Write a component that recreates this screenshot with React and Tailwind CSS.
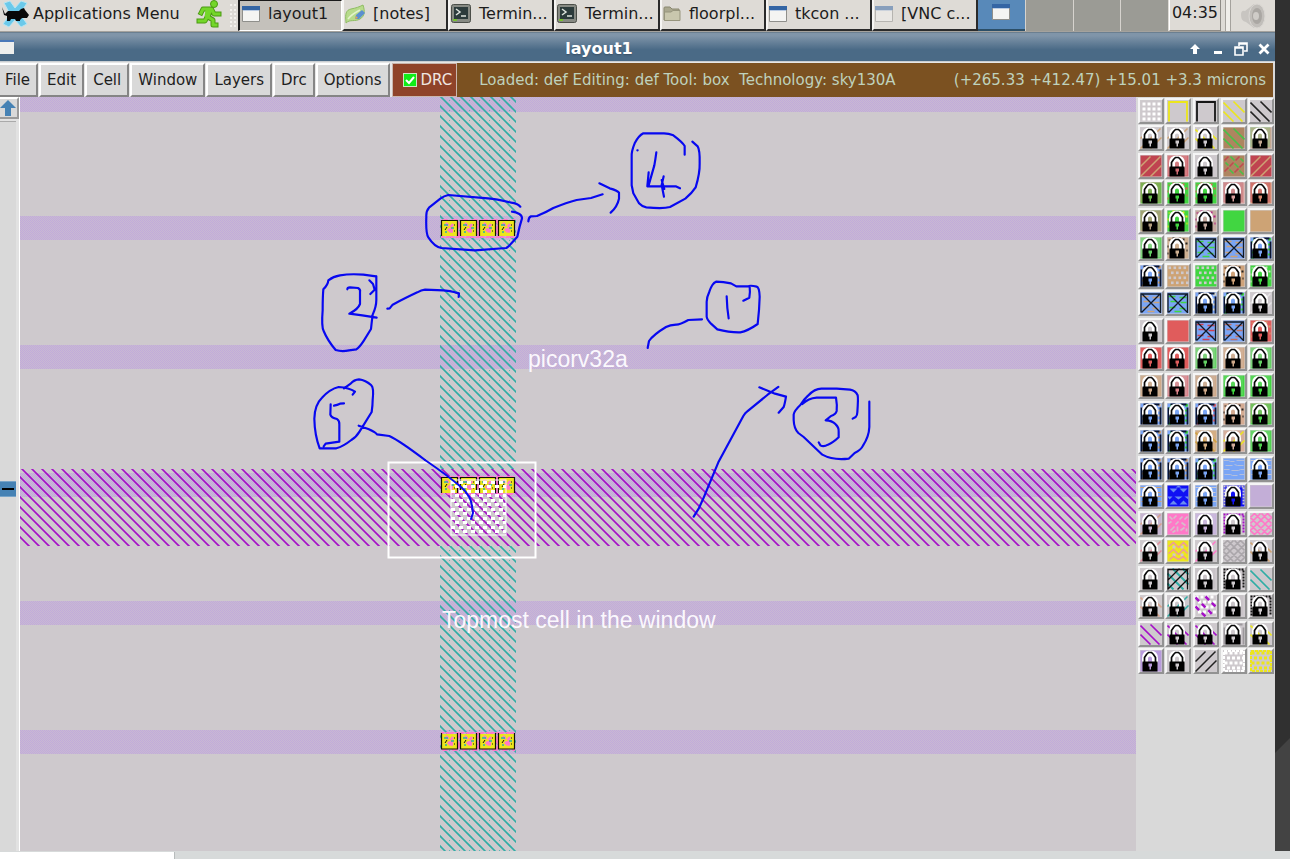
import React from "react";

const GRAY = "#cec9cd";
const GREEN = "#41d641";
const TAN = "#cda375";
const RED = "#e05c5c";
const BLUE = "#7aa5f5";
const PURPLE = "#a50fc8";
const TEAL = "#2fada5";
const PINK = "#ff78c8";
const YELLOW = "#ece61c";

/* Each swatch: [locked, fill, motif, colour, second colour] */
const PALETTE = [
  [0, GRAY, "dots", "#ffffff"], [0, GRAY, "open", YELLOW], [0, GRAY, "open", "#161616"], [0, GRAY, "diag", YELLOW], [0, GRAY, "diag", "#222222"],
  [1, GRAY, "slash", TAN], [1, GRAY, "slash", TAN], [1, GRAY, "diag", YELLOW], [0, "#ae8560", "diag", "#48c048"], [1, "#c4a892", "dither", "#5fd06a"],
  [0, "#c04450", "slash", TAN], [1, "#cf6a72", "dither", "#e6b9b4"], [1, GRAY, "none"], [0, "#ae8560", "weave", "#c04a50", "#48c048"], [0, "#c04450", "slash", TAN],
  [1, "#6cba4e", "dither", "#b08a60"], [1, GREEN, "specks", RED], [1, GREEN, "specks", RED], [1, "#d9a09c", "dither", "#b5445a"], [1, "#d98a70", "dither", "#b5305a"],
  [1, "#b4a080", "dither", "#69b050"], [1, GREEN, "specks", YELLOW], [1, "#c4aaa0", "specks", "#b01c80"], [0, GREEN, "none"], [0, TAN, "none"],
  [1, "#64d264", "dither", "#d8d8cc"], [1, "#cfb091", "specks", "#222222"], [0, BLUE, "xbox", GREEN], [0, BLUE, "xbox", TAN], [1, BLUE, "frame", "#0a1430", GREEN],
  [1, BLUE, "frame", "#0a1430", TAN], [0, TAN, "brick", GRAY], [0, GREEN, "brick", GRAY], [1, "#cfa37a", "specks", "#222222"], [1, GREEN, "specks", "#d8d8cc"],
  [0, BLUE, "xbox", TAN], [0, BLUE, "xbox", GREEN], [1, BLUE, "frame", "#0a1430", "#d8d8cc"], [1, BLUE, "frame", "#0a1430", GREEN], [1, GRAY, "slash", "#e6e4e6"],
  [1, GRAY, "none"], [0, RED, "none"], [0, BLUE, "xbox", "#d04050"], [0, BLUE, "xbox", "#c07060"], [1, RED, "specks", TAN],
  [1, RED, "none"], [1, RED, "none"], [1, "#64d264", "dither", "#c8d0c0"], [1, "#cfa98a", "dither", "#d8c8bc"], [1, "#64d264", "dither", "#c8d0c0"],
  [1, "#cfa98a", "dither", "#c8c0a8"], [1, "#d98088", "dither", "#d8c8c8"], [1, "#cfa98a", "dither", "#c8c0b8"], [1, GREEN, "dither", "#a0d8a0"], [1, GREEN, "dither", "#a0d8a0"],
  [1, BLUE, "frame", "#0a1430", "#d8c8bc"], [1, BLUE, "frame", "#0a1430", GREEN], [1, BLUE, "frame", "#0a1430", "#d86070"], [1, "#d4ab92", "specks", "#222222"], [1, "#50d250", "dither", "#d89080"],
  [1, BLUE, "frame", "#0a1430", TAN], [1, BLUE, "frame", "#0a1430", GREEN], [1, "#d4ae84", "diag", "#d0a040"], [1, "#d4ae9c", "slash", YELLOW], [1, "#50d250", "dither", "#a8d8a8"],
  [1, BLUE, "frame", "#0a1430", TAN], [1, BLUE, "frame", "#0a1430", TAN], [1, BLUE, "frame", "#0a1430", GREEN], [0, BLUE, "waves", "#b4bfdc"], [1, BLUE, "waves", "#c8c8d4"],
  [1, BLUE, "waves", TAN], [0, "#1010f4", "tri", "#6a8cf0"], [1, BLUE, "waves", "#c8c8d4"], [1, "#1010f4", "dashed", GRAY], [0, "#c6b0d8", "dither", "#bda9d2"],
  [1, "#c6b4d0", "slash", "#d6a08c"], [0, PINK, "petals", "#d8bccb"], [1, "#c8b4dc", "dither", "#d0c4dc"], [1, GRAY, "dashed", PURPLE], [0, GRAY, "hatch", PINK],
  [1, GRAY, "slash", "#e08c9c"], [0, YELLOW, "tape", "#ee9a9a"], [1, GRAY, "slash", PINK], [0, GRAY, "hatch", "#aaa6aa"], [1, GRAY, "diag", TAN],
  [1, GRAY, "none"], [0, GRAY, "crossbox", TEAL], [1, GRAY, "dither", "#b8b4b8"], [1, GRAY, "dashed", "#161616"], [0, GRAY, "diag", TEAL],
  [1, GRAY, "diag", "#d8a48c"], [1, GRAY, "slash", TEAL], [0, "#ffffff", "dashdiag", PURPLE], [1, GRAY, "dither", "#b8b4b8"], [1, GRAY, "dashed", "#161616"],
  [0, GRAY, "diag", PURPLE], [1, GRAY, "diag", PURPLE], [1, GRAY, "diag", PURPLE], [1, GRAY, "frame", "#9c989c", GRAY], [1, GRAY, "diag", YELLOW],
  [1, "#b89adc", "none"], [1, GRAY, "none"], [0, GRAY, "slash", "#222222"], [0, GRAY, "mesh", "#ffffff"], [0, GRAY, "mesh", YELLOW],
];

const DIAG = "M0 11L10 21M0 2L19 21M10 1L21 12";
const SLASH = "M0 11L10 1M0 21L20 1M10 21L21 10";

function gridCells(step, size, offset, stagger) {
  const cells = [];
  let row = 0;
  for (let y = offset; y < 20; y += step) {
    for (let x = offset + (stagger && row % 2 ? step / 2 : 0); x < 20; x += step) {
      cells.push(<rect key={`${x}-${y}`} x={x} y={y} width={size} height={size} />);
    }
    row += 1;
  }
  return cells;
}

function Motif({ kind, a, b }) {
  switch (kind) {
    case "dots":
      return <g fill={a}>{gridCells(5, 3, 2)}</g>;
    case "mesh":
      return (
        <g fill={a}>
          {gridCells(5, 3, 1, true)}
          <path d="M.5 .5H20.500V20.500H.5Z" fill="none" stroke={a} strokeWidth="2" strokeDasharray="3 1" />
        </g>
      );
    case "brick":
      return <g fill={a}>{gridCells(5, 2.6, 1, true)}</g>;
    case "dither":
      return <g fill={a}>{gridCells(2, 1, 0)}</g>;
    case "specks":
      return <path d="M1 2h2v1h-2zM5 0h2v2h-2zM15 1h2v2h-2zM18 5h2v2h-2zM0 8h1v2h-1zM19 12h1v2h-1zM12 0h1v1h-1zM0 15h1v2h-1z" fill={a} />;
    case "open":
      return <path d="M1.500 21V1.500H19.500V21" fill="none" stroke={a} strokeWidth="1.800" />;
    case "diag":
      return <path d={DIAG} fill="none" stroke={a} strokeWidth="1.600" />;
    case "dashdiag":
      return (
        <g fill="none">
          <path d="M0 0H21V21H0Z" fill={GRAY} />
          <g fill="#ffffff">{gridCells(5, 3, 0, true)}</g>
          <path d={DIAG} stroke={a} strokeWidth="2.500" strokeDasharray="5 4" />
        </g>
      );
    case "slash":
      return <path d={SLASH} fill="none" stroke={a} strokeWidth="1.500" />;
    case "hatch":
      return <path d="M0 4L4 0L21 17L17 21L0 4M0 11L10 21M11 0L21 10M0 17L17 0L21 4L4 21ZM0 10L10 0M11 21L21 11" fill="none" stroke={a} strokeWidth="1.600" />;
    case "weave":
      return (
        <g fill="none" strokeWidth="1.600">
          <path d="M1 5L5 1M12 5L16 1M6 11L10 7M16 12L20 8M1 16L5 12M11 17L15 13" stroke={a} />
          <path d="M7 1L11 5M17 3L20 6M2 7L5 10M11 8L15 12M6 14L10 18M16 15L20 19" stroke={b} />
        </g>
      );
    case "xbox":
      return (
        <g fill="none">
          <path d="M1 4H8M12 5H19M3 9H9M13 10H19M2 15H8M12 16H18M7 19H14" stroke={a} strokeWidth="1.700" />
          <path d="M.5 20V1.500H20V20.500M1 1L20 20M20 1L1 20" stroke="#111a26" strokeWidth="1.300" />
        </g>
      );
    case "crossbox":
      return (
        <g fill="none">
          <path d="M0 5L16 21M5 0L21 16M0 15L6 21M15 0L21 6" stroke={a} strokeWidth="2" />
          <path d="M0 12L12 0M0 21L21 0M10 21L21 10M.5 21V1H20V21" stroke="#111111" strokeWidth="1.300" />
        </g>
      );
    case "frame":
      return (
        <g fill="none">
          <path d="M2 21V2H19V21" stroke={b} strokeWidth="3" strokeDasharray="2 3" />
          <path d="M1 21V4M3 1H8M13 1H19M20 4V21" stroke={a} strokeWidth="1.800" />
        </g>
      );
    case "dashed":
      return <path d="M1 20V1H20V20" fill="none" stroke={a} strokeWidth="2" strokeDasharray="2 1" />;
    case "waves":
      return <path d="M0 2H5L7 3H11M13 2H21M2 7H9M11 6L14 7H20M0 11H6M8 12H15L17 11H21M1 16H7L9 17H14M16 16H21" fill="none" stroke={a} />;
    case "tri":
      return <path d="M2 3H10L6 7ZM12 3H20L16 7ZM0 11H5L2 14ZM7 11H15L11 14ZM17 11H21V14ZM2 19H10L6 15ZM12 19H20L16 15ZM8 2L11 0L14 2Z" fill={a} />;
    case "petals":
      return <path d="M2 3L5 6M9 2L6 5M12 6L15 3M17 6L20 3M1 10L4 8M8 11L11 8M14 9L18 12M3 17L7 13M10 13V18M13 17L17 14M19 18V15M8 17L5 19" fill="none" stroke={a} strokeWidth="1.700" />;
    case "tape":
      return (
        <g fill="none">
          <path d="M5 5H8V8H5ZM13 5H16V8H13ZM5 13H8V16H5ZM13 13H16V16H13Z" fill={GRAY} />
          <path d="M1 6L6 2L11 7L16 2L20 6M1 13L6 9L11 14L16 9L20 13M2 19L6 16L11 19L16 16L19 19" stroke={a} strokeWidth="1.500" />
        </g>
      );
    default:
      return null;
  }
}

function Lock({ tint }) {
  return (
    <g>
      <path d="M4.500 12V8C4.500 4 7 3 9.500 3S14.500 4 14.500 8V12" fill="none" stroke="#fff" strokeWidth="6" />
      <path d="M4 12V7L6 4L8 2H11L13 4L15 7V12" fill="none" stroke="#0a0a0a" strokeWidth="1.700" />
      <path d="M2 11H17V21H2Z" fill="#000" />
      <path d="M8 13H11.500V16H10.500V19H9V16H8Z" fill={tint} />
    </g>
  );
}

function Swatch({ data, index }) {
  const [locked, fill, kind, a, b] = data;
  return (
    <button
      type="button"
      aria-label={`Layer ${index + 1}`}
      className="size-[26px] overflow-hidden border-2 border-t-[#f5f5f5] border-r-[#929292] border-b-[#929292] border-l-[#f5f5f5] bg-[#d0cdd0]"
    >
      <svg viewBox="-0.5 -0.5 22 22" className="block size-full">
        <path d="M0 0H21V21H0Z" fill={fill} />
        <Motif kind={kind} a={a} b={b} />
        {locked ? <Lock tint={fill} /> : null}
      </svg>
    </button>
  );
}

function WindowIcon({ faded }) {
  return (
    <svg viewBox="0 0 18 16" className={faded ? "h-4 w-[18px] shrink-0 opacity-50" : "h-4 w-[18px] shrink-0"}>
      <path d="M.5 .5H17.500V15.500H.5Z" fill="#f4f4f2" stroke="#8f8f8b" />
      <path d="M0 0H18V4H0Z" fill="#3465a4" />
      <path d="M1 4.500H17" stroke="#b9cbe3" />
    </svg>
  );
}

function TerminalIcon() {
  return (
    <svg viewBox="0 0 20 20" className="size-5 shrink-0">
      <rect x=".5" y=".5" width="19" height="18" rx="2" fill="#878a83" stroke="#4b4e48" />
      <path d="M3 3H17V15H3Z" fill="#2c3b3b" />
      <path d="M5 5L9 8L5 11M10 12H15" fill="none" stroke="#dde3dd" strokeWidth="1.500" />
      <path d="M2 16H6" stroke="#73d216" strokeWidth="1.500" />
    </svg>
  );
}

function FolderIcon() {
  return (
    <svg viewBox="0 0 18 16" className="h-4 w-[18px] shrink-0">
      <path d="M1 2Q1 1 2 1H7L9 3H16V14H1Z" fill="#aaa88f" stroke="#8a8871" />
      <path d="M1.500 6H8L10 4.500H17V14.500H1.500Z" fill="#c9c7ad" stroke="#97957d" />
    </svg>
  );
}

function LeafIcon() {
  return (
    <svg viewBox="0 0 20 20" className="size-5 shrink-0">
      <path d="M1 18C0 10 1 6 6 5C11 4 14 3 18 1C20 7 20 12 15 15C10 18 5 15 1 19Z" fill="#b7db8b" stroke="#8fbd63" />
      <path d="M3 15C6 11 9 9 15 6" fill="none" stroke="#e3f2cc" strokeWidth="1.500" />
      <path d="M10 15L11 11L17 6L20 9L14 15Z" fill="#5b8fd0" />
      <path d="M10 15L11 12L13 14Z" fill="#e9a54c" />
    </svg>
  );
}

function MouseIcon() {
  return (
    <svg viewBox="0 0 28 28" className="size-7 shrink-0">
      <path d="M3 3L9 1L14 8L20 1L26 3L19 14L26 24L20 27L14 20L8 27L2 24L9 14Z" fill="#6bc9ea" stroke="#b5e5f3" />
      <path d="M1 7L4 14L7 11H18L20 9L23 8L24 10L28 15L26 18H21L19 20V21H15L14 19H10L9 21H6V16L3 15Z" fill="#080808" />
    </svg>
  );
}

function RunnerIcon() {
  return (
    <svg viewBox="0 0 26 28" className="h-7 w-[26px] shrink-0">
      <g fill="none" strokeLinecap="square" strokeLinejoin="round">
        <path d="M5 13L7 9H15L12 17L17 20V25H20M16 10L18 14H23M11 17L9 21H3" stroke="#4a9a12" strokeWidth="5" />
        <path d="M5 13L7 9H15L12 17L17 20V25H20M16 10L18 14H23M11 17L9 21H3" stroke="#74d62a" strokeWidth="3" />
      </g>
      <circle cx="18" cy="4" r="3.500" fill="#74d62a" stroke="#4a9a12" />
      <path d="M12 10L11 17" stroke="#74d62a" strokeWidth="5" />
    </svg>
  );
}

function SpeakerIcon() {
  return (
    <svg viewBox="0 0 28 26" className="h-[26px] w-7">
      <path d="M2 12Q2 7 6 8L15 1V25L7 19Q2 18 2 12Z" fill="#c8c5c1" />
      <ellipse cx="18" cy="13" rx="8" ry="12" fill="#c1beba" stroke="#dad7d3" />
      <ellipse cx="18" cy="13" rx="5" ry="8" fill="#aaa7a3" />
      <ellipse cx="17" cy="13" rx="3" ry="4" fill="#cfccc8" />
    </svg>
  );
}

const TASKS = [
  { label: "[notes]", icon: <LeafIcon /> },
  { label: "Termin...", icon: <TerminalIcon /> },
  { label: "Termin...", icon: <TerminalIcon /> },
  { label: "floorpl...", icon: <FolderIcon /> },
  { label: "tkcon ...", icon: <WindowIcon /> },
  { label: "[VNC c...", icon: <WindowIcon faded /> },
];

function TaskBar() {
  return (
    <header className="flex h-8 shrink-0 items-stretch overflow-hidden border-b border-[#a5a29d] bg-[#dedbd6] text-base whitespace-nowrap text-[#1c1c1c]">
      <button type="button" className="flex w-[184px] shrink-0 items-center gap-1 pb-1 pl-px">
        <MouseIcon />
        Applications Menu
      </button>
      <button type="button" aria-label="Run program" className="flex w-[46px] shrink-0 items-center pb-1 pl-3">
        <RunnerIcon />
      </button>
      <span className="my-1 mr-0.5 w-1.5 shrink-0 border-x-2 border-dotted border-[#f4f2ee]" />
      <button type="button" aria-pressed="true" className="flex w-[104px] shrink-0 items-center gap-2 border-t border-r border-b border-l-2 border-[#1a1a1a] border-r-white border-b-white bg-[#c4c1bb] pb-1 pl-0.5">
        <WindowIcon />
        layout1
      </button>
      {TASKS.map((task, i) => (
        <button key={i} type="button" className="flex w-[106px] shrink-0 items-center gap-2 overflow-hidden border-r-2 border-b-2 border-l-2 border-r-[#2a2a2a] border-b-[#2a2a2a] border-l-[#f6f5f3] pb-0.5 pl-px">
          {task.icon}
          {task.label}
        </button>
      ))}
      <div className="flex w-[190px] shrink-0 gap-px bg-[#d6d3ce]">
        <button type="button" aria-label="Workspace 1" className="flex flex-1 justify-center border-b-2 border-[#2c4f68] bg-[#5889b9] pt-1">
          <WindowIcon />
        </button>
        <button type="button" aria-label="Workspace 2" className="flex-1 bg-[#9b9b95]" />
        <button type="button" aria-label="Workspace 3" className="flex-1 bg-[#9b9b95]" />
        <button type="button" aria-label="Workspace 4" className="flex-1 bg-[#9b9b95]" />
      </div>
      <time className="ml-px w-[52px] shrink-0 border-r border-b border-l border-[#8e8b86] border-l-white text-center leading-[26px]">04:35</time>
      <span className="ml-1 w-1.5 shrink-0 border-r border-l border-[#a5a29d] bg-[#f0eeea]" />
      <button type="button" aria-label="Volume" className="ml-auto pr-2">
        <SpeakerIcon />
      </button>
    </header>
  );
}

function TitleBar() {
  return (
    <div className="flex h-[30px] shrink-0 items-center border-y border-t-[#6b7f90] border-b-[#c9ced2] bg-linear-to-b from-[#8095a9] from-10% to-[#4a6a86] to-60% text-white">
      <span className="h-3.5 w-3.5 border-t-2 border-[#4a78b8] bg-[#eeeeec]" />
      <h1 className="flex-1 pt-1 text-center text-base leading-6 font-bold text-shadow-sm">layout1</h1>
      <div className="flex items-center gap-[9px] pt-1 pr-1 pl-1">
        <button type="button" aria-label="Shade">
          <svg viewBox="0 0 14 14" className="block size-3.5"><path d="M7 2L12 7H9V12H5V7H2Z" fill="#fff" /></svg>
        </button>
        <button type="button" aria-label="Minimize">
          <svg viewBox="0 0 14 14" className="block size-3.5"><path d="M3 9H11V12H3Z" fill="#fff" /></svg>
        </button>
        <button type="button" aria-label="Restore">
          <svg viewBox="0 0 14 14" className="block size-3.5"><path d="M5 4V1H13V9H10M1 5H9V13H1ZM5 2H13M1 6H9" fill="none" stroke="#fff" strokeWidth="1.600" /></svg>
        </button>
        <button type="button" aria-label="Close">
          <svg viewBox="0 0 14 14" className="block size-3.5"><path d="M2.500 2.500L11.500 11.500M11.500 2.500L2.500 11.500" stroke="#fff" strokeWidth="2.800" /></svg>
        </button>
      </div>
    </div>
  );
}

const MENUS = ["Edit", "Cell", "Window", "Layers", "Drc", "Options"];

function MenuBar() {
  return (
    <nav className="flex h-[35px] shrink-0 items-stretch border-t border-[#e6e6e6] bg-[#7b5121] text-[15px] whitespace-nowrap text-[#1e1e1e]">
      <div className="flex gap-px bg-[#e6e6e6] pr-0.5">
        <button type="button" className="border-t-2 border-r-2 border-b-2 border-t-white border-r-[#858585] border-b-[#858585] bg-[#d9d9d9] pr-1.5 pl-[5px]">File</button>
        {MENUS.map((m) => (
          <button key={m} type="button" className="border-2 border-t-white border-r-[#858585] border-b-[#858585] border-l-white bg-[#d9d9d9] px-1.5">
            {m}
          </button>
        ))}
      </div>
      <label className="flex items-center gap-1 border border-[#c9b6ae] bg-[#8f4329] pr-1 pl-2.5 text-[#efe6e2]">
        <span className="grid place-items-center">
          <input type="checkbox" defaultChecked className="col-start-1 row-start-1 size-3.5 appearance-none border border-[#cbe8c2] bg-[#10ee18]" />
          <svg viewBox="0 0 14 14" className="pointer-events-none col-start-1 row-start-1 size-3.5"><path d="M3 7L6 10L11 4" fill="none" stroke="#fff" strokeWidth="2" /></svg>
        </span>
        DRC
      </label>
      <div className="flex flex-1 items-center justify-between border-r-2 border-[#d9d9d9] pr-[7px] pl-[22px] text-[#bfd2bd]">
        <span className="whitespace-pre">Loaded: def Editing: def Tool: box  Technology: sky130A</span>
        <span>(+265.33 +412.47) +15.01 +3.3 microns</span>
      </div>
    </nav>
  );
}

const BANDS = [
  [97, 15], [216, 24], [345, 24], [473, 24], [601, 24], [730, 24],
];

function ViaRow({ y, flip }) {
  return (
    <g>
      <path d={`M441 ${y - 1}h74v19h-74z`} fill="url(#pinkweave)" />
      {[441, 460, 479, 498].map((x, i) => (
        <g key={x}>
          <rect x={x + 1} y={y + 1} width="16" height="15" fill={YELLOW} />
          <path
            d={flip ? `M${x + 0.5} ${y}v16h16v-16` : `M${x + 0.5} ${y + 16}v-15.500h16v15.500`}
            fill="none" stroke="#121208" strokeWidth="1.200"
          />
          <path d={`M${x + 5} ${y + 3}l7 8M${x + 12} ${y + 4}l-5 7M${x + 8} ${y + 11}l5 1`} fill="none" stroke={PINK} strokeWidth="2.500" strokeDasharray="4 2" />
          <path d={`M${x + 3} ${y + 5}h4M${x + 4} ${y + 12}h2M${x + 10 + (i % 2)} ${y + 8}h3`} stroke={TEAL} strokeWidth="1.500" />
          <path d={`M${x + 4} ${y + 10}l2 -3M${x + 13} ${y + 5}h1M${x + 13} ${y + 11}h1`} stroke="#111" />
        </g>
      ))}
    </g>
  );
}

function LayoutCanvas() {
  return (
    <svg viewBox="20 97 1116 754" preserveAspectRatio="xMinYMin slice" role="img" aria-label="Chip layout" className="block size-full bg-[#cec9cd]">
      <defs>
        <pattern id="band" width="2" height="2" patternUnits="userSpaceOnUse">
          <path d="M0 0H2V2H0Z" fill="#c9b9d3" />
          <path d="M0 0H1V1H0ZM1 1H2V2H1Z" fill="#c1abda" />
        </pattern>
        <pattern id="teal" width="10" height="10" patternUnits="userSpaceOnUse">
          <path d="M2 -2L16 12M-8 -2L6 12M-2 -12L12 2" fill="none" stroke={TEAL} strokeWidth="1.600" />
        </pattern>
        <pattern id="purple" width="10" height="10" patternUnits="userSpaceOnUse">
          <path d="M1 -2L15 12M-9 -2L5 12" fill="none" stroke={PURPLE} strokeWidth="1.600" />
        </pattern>
        <pattern id="pinkweave" width="10" height="10" patternUnits="userSpaceOnUse">
          <path d="M0 5L5 0L10 5L5 10Z" fill="none" stroke={PINK} strokeWidth="3" />
        </pattern>
        <pattern id="pegs" x="451" y="481" width="8" height="9" patternUnits="userSpaceOnUse">
          <path d="M0 0H4V3H0ZM4 4H8V7H4Z" fill="#fff" />
        </pattern>
      </defs>
      {BANDS.map(([y, h]) => (
        <rect key={y} x="20" y={y} width="1116" height={h} fill="url(#band)" />
      ))}
      <path d="M440 97H516V469H440ZM440 546H516V851H440Z" fill="url(#teal)" />
      <rect x="20" y="469" width="1116" height="77" fill="url(#purple)" />
      <ViaRow y={220} />
      <ViaRow y={477} />
      <ViaRow y={733} flip />
      <rect x="451" y="480" width="55" height="55" fill="url(#pegs)" stroke="#fff" />
      <rect x="388.500" y="462.500" width="147" height="95" fill="none" stroke="#fff" strokeWidth="2" />
      <g fill="#fbf8fd" fontFamily="'Liberation Sans', Arial, sans-serif" fontSize="23">
        <text x="528" y="367">picorv32a</text>
        <text x="442" y="628">Topmost cell in the window</text>
      </g>
      <g fill="none" stroke="#0808f0" strokeLinecap="round" strokeLinejoin="round">
        <g transform="translate(380 120) scale(.33333)" strokeWidth="6.500">
          <path d="M421 260Q412 250 394 248Q350 237 324 235L205 225Q192 228 181 236L147 263Q138 273 139 290Q137 340 145 352Q163 380 184 384L285 391L379 384Q388 378 393 371L412 350Q418 320 426 295Q426 287 418 282Q408 276 396 275" />
          <path d="M445 304Q446 292 453 289L471 288Q500 276 520 264Q560 248 590 240L633 234L668 223M658 190L689 205Q712 211 717 218V236Q712 260 692 278" />
          <path d="M914 104V78Q908 67 880 46Q866 40 852 40H790Q776 47 764 70Q754 94 755 110V196L760 220L777 250Q786 260 799 262Q850 267 870 261L916 236Q935 220 947 202Q960 160 959 130Q960 90 953 79L937 65" />
          <path d="M829 97Q826 120 823 136L805 199H887L900 205M806 157L802 199M851 169L845 195L852 230M845 180L853 207M772 91h1" />
        </g>
        <g transform="translate(300 260) scale(.33333)" strokeWidth="6.500">
          <path d="M228 49L190 44Q150 41 120 46Q100 49 85 61Q84 74 70 88Q68 110 68 150Q64 200 71 213Q83 242 107 270Q126 276 147 271L169 268Q180 260 192 241L213 207Q217 170 218 164Q229 140 229 120V49M208 61L219 72L224 89L211 102M142 88Q142 82 150 82L174 84Q182 88 180 96V132Q174 148 148 161L187 166L230 173" />
          <path d="M262 146L269 145L278 134Q320 112 352 97Q364 90 375 89L430 91Q452 93 465 97L477 100L476 111" />
          <path d="M158 404L165 395Q147 383 116 381Q90 387 66 413Q44 434 43 476Q44 525 59 565H109Q130 559 154 540Q168 532 179 514L215 456Q218 435 218 420Q222 383 214 376Q197 360 177 358Q162 359 152 371L132 385M132 430L120 431Q112 435 102 437M92 433L91 464Q94 474 111 477Q119 483 118 494V545L77 551L71 559M176 497L205 507Q226 516 231 523L268 528Q300 543 375 600" />
        </g>
        <path d="M425 460Q447 475 461 487Q471 496 472 506L473 513L471 519" strokeWidth="2" />
        <g transform="translate(620 260) scale(.33333)" strokeWidth="6.500">
          <path d="M370 122L388 113Q391 95 389 79H349L333 70Q310 65 288 65Q276 70 268 95Q260 112 260 125V170Q261 179 273 191L292 208Q330 218 361 217Q383 213 413 192Q418 150 419 110Q418 82 410 80Q394 76 387 78M320 109Q321 145 326 175M246 178L205 180Q178 195 168 194Q150 195 138 201Q100 224 87 243L83 264" />
          <path d="M221 770L236 746Q253 710 265 679L295 607L370 468Q376 458 381 455L442 405L475 381M418 382L465 401L498 410Q494 434 491 441L476 458" />
          <path d="M698 476L707 471Q712 466 712 457Q715 415 713 406Q706 391 690 389L650 386H604Q584 386 564 407Q550 420 541 435Q522 453 521 464V480Q522 506 535 519L551 531L607 584Q640 602 686 596L704 579Q723 570 729 557Q747 529 748 501V425M547 432Q565 415 590 413H648Q652 437 650 453Q647 464 633 468L617 481Q636 481 647 493Q657 502 656 515V532Q638 549 624 554Q611 562 601 556L596 547" />
        </g>
      </g>
    </svg>
  );
}

function ScrollBar() {
  return (
    <div className="flex w-5 shrink-0 flex-col border-r border-white bg-[#e2e2e2]">
      <button type="button" aria-label="Scroll up" className="h-[22px] w-[19px] border-t-2 border-r-2 border-b-2 border-t-white border-r-[#9a9a9a] border-b-[#9a9a9a] bg-[#d9d9d9]">
        <svg viewBox="0 0 17 18" className="block size-full"><path d="M8 1L16 9H11V17H5V9H0Z" fill="#4682b4" /></svg>
      </button>
      <div className="mt-0.5 mr-[3px] flex flex-1 flex-col border-t border-[#aaaaaa] bg-[#d9d9d9] pt-1">
        <span className="basis-[49%]" />
        <button type="button" aria-label="Scroll position" className="flex h-4 shrink-0 items-center border-y border-[#78a4c8] bg-[#4682b4] pl-0.5">
          <span className="h-0.5 w-3 bg-black" />
        </button>
      </div>
    </div>
  );
}

export default function App() {
  return (
    <div className="flex h-screen flex-col overflow-hidden bg-[#d7dada] font-['DejaVu_Sans',sans-serif]">
      <div className="flex min-h-0 flex-1">
        <div className="flex min-w-0 flex-1 flex-col bg-[#d9d9d9]">
          <TaskBar />
          <TitleBar />
          <MenuBar />
          <main className="flex min-h-0 flex-1">
            <ScrollBar />
            <div className="min-w-0 flex-1"><LayoutCanvas /></div>
            <aside className="w-[139px] shrink-0 bg-[#d9d9d9] pl-px">
              <div className="grid h-[578px] grid-cols-5 grid-rows-[repeat(21,minmax(0,1fr))] place-items-center">
                {PALETTE.map((item, i) => (
                  <Swatch key={i} data={item} index={i} />
                ))}
              </div>
            </aside>
          </main>
        </div>
        <div className="w-[15px] shrink-0 bg-[#303030]">
          <svg viewBox="0 0 15 851" preserveAspectRatio="none" className="block size-full"><path d="M15 738V851H0V753Z" fill="#434343" /></svg>
        </div>
      </div>
      <footer className="flex h-2 shrink-0">
        <span className="mt-px w-[175px] border-r border-[#b8bcbc] bg-white" />
      </footer>
    </div>
  );
}
